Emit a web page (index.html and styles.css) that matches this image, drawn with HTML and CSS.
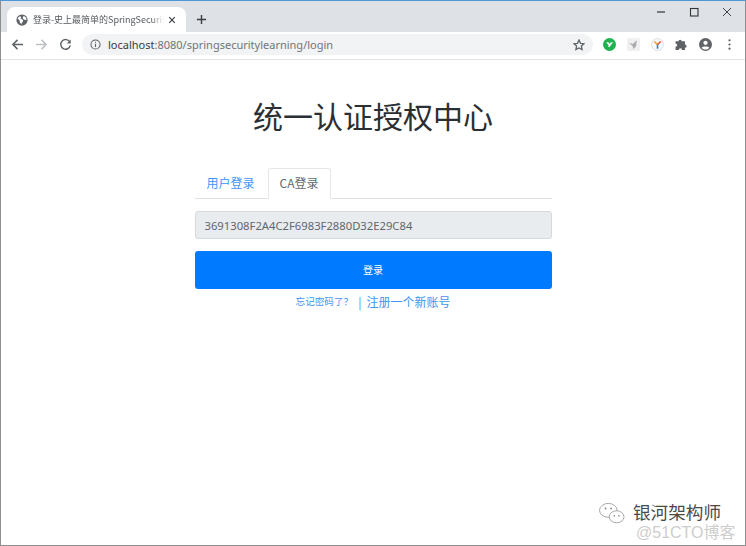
FILE: index.html
```html
<!DOCTYPE html>
<html lang="zh">
<head>
<meta charset="utf-8">
<title>登录</title>
<link rel="stylesheet" href="styles.css">
</head>
<body>
<div class="window">
  <div class="tabstrip">
    <div class="tab">
      <svg class="favicon" viewBox="0 0 16 16"><circle cx="8" cy="8" r="7.500" fill="#5f6368"/><path d="M2 5.500l3-2.500 2 1-1 2 3 1.500.5 2-2 2.500v2L5 11 5 9zM10.500 2.500l3 2 .5 3-2 .5-2.500-1.500-.5-2.500z" fill="#fff"/></svg>
      <span class="tab-title">登录-史上最简单的SpringSecurity</span>
      <svg class="tab-close" viewBox="0 0 10 10"><path d="M1.500 1.500l7 7M8.500 1.500l-7 7" stroke="#3c4043" stroke-width="1.500" fill="none"/></svg>
    </div>
    <svg class="newtab" viewBox="0 0 12 12"><path d="M6 1v10M1 6h10" stroke="#3c4043" stroke-width="1.600" fill="none"/></svg>
    <div class="winctrls">
      <svg viewBox="0 0 10 10"><path d="M1 5h8" stroke="#333" stroke-width="1.200"/></svg>
      <svg viewBox="0 0 10 10"><rect x="1.500" y="1.500" width="7.500" height="7.500" fill="none" stroke="#333" stroke-width="1.100"/></svg>
      <svg viewBox="0 0 10 10"><path d="M1 1l8 8M9 1l-8 8" stroke="#444" stroke-width="1"/></svg>
    </div>
  </div>
  <div class="toolbar">
    <svg class="nav" viewBox="0 0 14 14"><path d="M13 7H2M7 2L2 7l5 5" stroke="#5f6368" stroke-width="1.600" fill="none"/></svg>
    <svg class="nav" viewBox="0 0 14 14"><path d="M1 7h11M7 2l5 5-5 5" stroke="#bdc1c6" stroke-width="1.600" fill="none"/></svg>
    <svg class="nav" viewBox="0 0 14 14"><path d="M11.600 4.200A5.200 5.200 0 1 0 12.200 8" stroke="#5f6368" stroke-width="1.500" fill="none"/><path d="M12.600 1.600v4.200H8.400z" fill="#5f6368"/></svg>
    <div class="omnibox">
      <svg class="info" viewBox="0 0 12 12"><circle cx="6" cy="6" r="5" fill="none" stroke="#5f6368" stroke-width="1.100"/><path d="M6 5.200v3.600M6 3v1.200" stroke="#5f6368" stroke-width="1.200"/></svg>
      <span class="url"><span class="host">localhost</span>:8080/springsecuritylearning/login</span>
      <svg class="star" viewBox="0 0 12 12"><path d="M6 1l1.500 3.300 3.500.4-2.600 2.400.7 3.500L6 8.900l-3.100 1.700.7-3.500L1 4.700l3.500-.4z" fill="none" stroke="#5f6368" stroke-width="1.300"/></svg>
    </div>
    <div class="exts">
      <svg viewBox="0 0 14 14"><circle cx="7" cy="7" r="7" fill="#1db34f"/><path d="M3.500 4.500h2.300L7.200 6.300 8.700 4.500H10.800L7 9.800H5.200L6.300 8.300z" fill="#fff"/></svg>
      <svg viewBox="0 0 14 14"><rect width="14" height="14" rx="2" fill="#f0f0f0"/><path d="M2 5l4.300 1.500L10.500 2.500 9.800 8.500 7 12l-1-3.500z" fill="#a8aaad"/></svg>
      <svg viewBox="0 0 14 14"><circle cx="7" cy="7" r="6.400" fill="#fafafa" stroke="#d4d4d4" stroke-width="0.800"/><path d="M3.500 3.800L7 7" stroke="#f0a020" stroke-width="1.700"/><path d="M10.500 3.800L7 7" stroke="#e8483a" stroke-width="1.700"/><path d="M7 7v4.500" stroke="#2a7de1" stroke-width="1.700"/></svg>
      <svg viewBox="1 2 12 12"><path d="M1.500 5h2.700a1.500 1.500 0 0 1 3 0h3v3a1.500 1.500 0 0 1 0 3v2H7.500a1.500 1.500 0 0 0-3 0H1.500V10a1.500 1.500 0 0 0 0-3z" fill="#5f6368"/></svg>
      <svg viewBox="0 0 14 14"><circle cx="7" cy="7" r="7" fill="#5f6368"/><circle cx="7" cy="5.200" r="2.300" fill="#fff"/><path d="M2.800 10.500c1-1.800 7.400-1.800 8.400 0-1 1.400-2.500 2-4.200 2s-3.200-.6-4.200-2z" fill="#fff"/></svg>
      <svg viewBox="0 0 14 14"><circle cx="7" cy="2.500" r="1.200" fill="#5f6368"/><circle cx="7" cy="7" r="1.200" fill="#5f6368"/><circle cx="7" cy="11.500" r="1.200" fill="#5f6368"/></svg>
    </div>
  </div>
  <main class="page">
    <h1 class="title">统一认证授权中心</h1>
    <div class="panel">
      <div class="tabs">
        <a class="tablink">用户登录</a>
        <a class="tablink active">CA登录</a>
      </div>
      <input class="cert" type="text" value="3691308F2A4C2F6983F2880D32E29C84" disabled>
      <button class="submit" type="button">登录</button>
      <div class="links"><a class="forgot">忘记密码了？</a><span class="sep">|</span><a class="register">注册一个新账号</a></div>
    </div>
  </main>
  <div class="watermark">
    <svg class="wechat" viewBox="0 0 30 26"><ellipse cx="11" cy="9" rx="9.500" ry="7.500" fill="#fff" stroke="#8a8a8a" stroke-width="0.800"/><ellipse cx="20" cy="16" rx="8" ry="6.500" fill="#fff" stroke="#8a8a8a" stroke-width="0.800"/><circle cx="8" cy="7" r="1" fill="#888"/><circle cx="14" cy="7" r="1" fill="#888"/><circle cx="17.500" cy="15" r=".9" fill="#888"/><circle cx="22.500" cy="15" r=".9" fill="#888"/></svg>
    <div class="wm-text">
      <div class="wm-name">银河架构师</div>
      <div class="wm-site">@51CTO博客</div>
    </div>
  </div>
</div>
</body>
</html>
```
FILE: styles.css
```css
* { box-sizing: border-box; }
html, body { margin: 0; padding: 0; }
body {
  width: 746px;
  height: 546px;
  overflow: hidden;
  font-family: "Noto Sans CJK SC", "Liberation Sans", sans-serif;
}
.window {
  position: relative;
  width: 746px;
  height: 546px;
  display: flex;
  flex-direction: column;
  background: #fff;
  border: 1px solid #8f8f8f;
  border-top: 1px solid #4a98d8;
}
.tabstrip {
  height: 31px;
  flex: none;
  background: #dee1e6;
  display: flex;
  align-items: flex-end;
  padding-left: 6px;
}
.tab {
  width: 179px;
  height: 25px;
  background: #fff;
  border-radius: 8px 8px 0 0;
  display: flex;
  align-items: center;
  padding: 0 8px 0 9px;
}
.favicon { width: 12px; height: 12px; flex: none; }
.tab-title {
  margin-left: 5px;
  width: 131px;
  flex: none;
  overflow: hidden;
  white-space: nowrap;
  font-size: 9px;
  color: #55595d;
  -webkit-mask-image: linear-gradient(to right, #000 90%, transparent);
  mask-image: linear-gradient(to right, #000 90%, transparent);
}
.tab-close { width: 8px; height: 8px; margin-left: 4px; flex: none; }
.newtab { width: 11px; height: 11px; margin: 0 0 7px 10px; flex: none; }
.winctrls {
  margin-left: auto;
  align-self: flex-start;
  display: flex;
  gap: 23px;
  padding: 6px 13px 0 0;
}
.winctrls svg { width: 10px; height: 10px; display: block; }
.toolbar {
  height: 28px;
  flex: none;
  background: #fff;
  border-bottom: 1px solid #e2e3e5;
  display: flex;
  align-items: center;
  padding: 0 0 2px 10px;
  gap: 11px;
}
.nav { width: 13px; height: 13px; flex: none; }
.omnibox {
  width: 511px;
  height: 21px;
  margin-left: -1px;
  background: #f1f3f4;
  border-radius: 11px;
  display: flex;
  align-items: center;
  padding: 0 8px;
  flex: none;
}
.info { width: 11px; height: 11px; flex: none; }
.url {
  margin-left: 7px;
  font-family: "Noto Sans", sans-serif;
  font-size: 11px;
  color: #70757a;
}
.host { color: #3a3c40; }
.star { width: 12px; height: 12px; margin-left: auto; flex: none; }
.exts {
  display: flex;
  align-items: center;
  gap: 11px;
  margin-left: -1px;
}
.exts svg { width: 13px; height: 13px; display: block; }
.page {
  flex: 1;
  display: flex;
  flex-direction: column;
  align-items: center;
}
.title {
  margin: 34px 0 0;
  height: 42px;
  line-height: 42px;
  font-size: 30px;
  font-weight: 400;
  color: #2b2f33;
}
.panel { width: 357px; margin-top: 32px; }
.tabs {
  display: flex;
  height: 31px;
  border-bottom: 1px solid #dee2e6;
}
.tablink {
  height: 31px;
  padding: 0 11px;
  font-size: 12px;
  line-height: 28px;
  color: #3f94f5;
  border: 1px solid transparent;
  border-radius: 3px 3px 0 0;
}
.tablink.active {
  margin-left: 1px;
  padding-right: 12px;
  color: #63696f;
  background: #fff;
  border-color: #e4e7ea #e4e7ea #fff;
}
.cert {
  display: block;
  width: 100%;
  height: 28px;
  margin-top: 12px;
  padding: 0 9px;
  font-family: "Noto Sans", sans-serif;
  font-size: 11.25px;
  color: #5f666c;
  background: #e9ecef;
  border: 1px solid #d5dade;
  border-radius: 3px;
}
.submit {
  display: block;
  width: 100%;
  height: 38px;
  margin-top: 12px;
  padding: 0 0 2px;
  font-family: inherit;
  font-size: 10px;
  color: #fff;
  background: #007bff;
  border: 0;
  border-radius: 3px;
}
.links {
  display: flex;
  justify-content: center;
  align-items: center;
  height: 24px;
  color: #3f94f5;
}
.forgot { font-size: 9.6px; }
.sep { font-size: 12px; margin: 0 5px 0 5px; }
.register { font-size: 12px; }
.watermark {
  position: absolute;
  right: 0;
  bottom: 0;
  width: 147px;
  height: 46px;
  display: flex;
  align-items: flex-start;
}
.wechat { width: 28px; height: 24px; margin: 3px 7px 0 0; flex: none; }
.wm-text { position: relative; }
.wm-name { font-size: 17.600px; line-height: 24px; color: #4a4a4a; margin-top: 1px; white-space: nowrap; }
.wm-site { font-family: "Liberation Sans", "Noto Sans CJK SC", sans-serif; font-size: 16px; line-height: 18px; color: #cdcdcd; margin: 0 0 0 3px; white-space: nowrap; }
```
